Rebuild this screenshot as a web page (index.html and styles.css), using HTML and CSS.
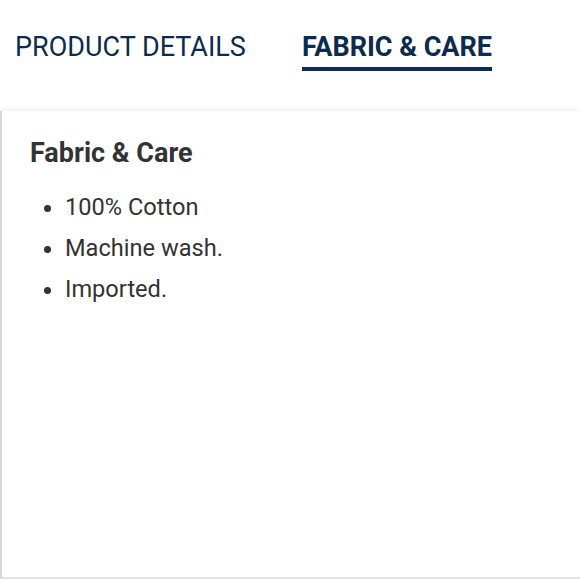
FILE: index.html
```html
<!DOCTYPE html>
<html lang="en">
<head>
    <meta charset="UTF-8">
    <meta name="viewport" content="width=device-width, initial-scale=1.0">
    <title>Fabric &amp; Care</title>
    <link rel="stylesheet" href="styles.css">
</head>
<body>
    <div class="tabs">
        <button class="tab">PRODUCT DETAILS</button>
        <button class="tab active">FABRIC &amp; CARE</button>
    </div>
    <div class="panel">
        <h2>Fabric &amp; Care</h2>
        <ul>
            <li>100% Cotton</li>
            <li>Machine wash.</li>
            <li>Imported.</li>
        </ul>
    </div>
</body>
</html>
```

FILE: styles.css
```css
body{
    font-family: Roboto, "Liberation Sans", Arial, sans-serif;
    margin: 0;
    background: #fff;
    height: 100vh;
    display: flex;
    flex-direction: column;
}

.tabs{
    display: flex;
    gap: 56px;
    padding: 31px 0 0 15px;
    height: 81px;
    box-sizing: border-box;
}

.tab{
    font-family: inherit;
    font-size: 27px;
    color: #0d2a4f;
    background: none;
    border: none;
    padding: 0 0 4px;
    height: 40px;
    border-bottom: 4px solid transparent;
    cursor: pointer;
}

.tab.active{
    font-weight: bold;
    border-bottom-color: #0d2a4f;
}

.panel{
    flex: 1;
    margin-top: 30px;
    border-left: 2px solid #d6d6d6;
    border-bottom: 2px solid #e2e2e2;
    box-shadow: 0 -2px 4px rgba(0,0,0,0.06);
    padding: 26px 28px;
    color: #333;
}

.panel h2{
    font-size: 27px;
    margin: 0 0 18px;
}

.panel ul{
    margin: 0;
    padding-left: 35px;
    font-size: 23.6px;
}

.panel li{
    line-height: 41px;
}
```
